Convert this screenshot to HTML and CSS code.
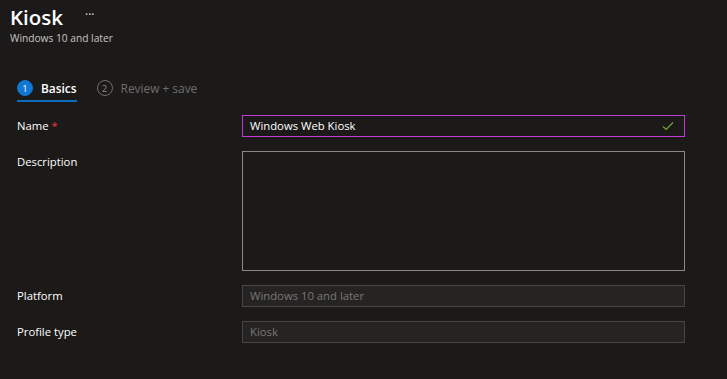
FILE: index.html
```html
<!DOCTYPE html>
<html lang="en">
<head>
<meta charset="utf-8">
<title>Kiosk</title>
<link rel="stylesheet" href="styles.css">
</head>
<body>
<header class="head">
  <div class="title-row">
    <h1 class="title">Kiosk</h1>
    <span class="more">···</span>
  </div>
  <div class="subtitle">Windows 10 and later</div>
</header>
<nav class="steps">
  <div class="step active">
    <span class="num">1</span>
    <span class="step-label">Basics</span>
  </div>
  <div class="step">
    <span class="num">2</span>
    <span class="step-label">Review + save</span>
  </div>
</nav>
<form class="form">
  <div class="row">
    <label class="label">Name <span class="req">*</span></label>
    <div class="field focus">
      <span class="value">Windows Web Kiosk</span>
      <svg class="check" width="12" height="10" viewBox="0 0 12 10"><path d="M1 5.5 L4.2 8.5 L11 1.5" fill="none" stroke="#73a832" stroke-width="1.2"/></svg>
    </div>
  </div>
  <div class="row">
    <label class="label">Description</label>
    <div class="field area"></div>
  </div>
  <div class="row">
    <label class="label">Platform</label>
    <div class="field disabled"><span class="value">Windows 10 and later</span></div>
  </div>
  <div class="row">
    <label class="label">Profile type</label>
    <div class="field disabled"><span class="value">Kiosk</span></div>
  </div>
</form>
</body>
</html>
```

FILE: styles.css
```css
html, body {
  margin: 0;
  padding: 0;
  background: #1b1a19;
  color: #ffffff;
  font-family: "Segoe UI", "Open Sans", "Noto Sans", sans-serif;
}
body {
  width: 727px;
  height: 379px;
  overflow: hidden;
}
.head {
  padding: 3px 0 0 10px;
}
.title-row {
  display: flex;
  align-items: center;
  height: 28px;
}
.title {
  margin: 0;
  font-size: 20.5px;
  font-weight: 600;
  line-height: 28px;
}
.more {
  margin-left: 22px;
  font-size: 12px;
  color: #e0e0e0;
  position: relative;
  top: -3px;
}
.subtitle {
  font-size: 10.2px;
  color: #c8c6c4;
  line-height: 14px;
}
.steps {
  display: flex;
  gap: 20px;
  margin: 31px 0 0 17px;
}
.step {
  display: flex;
  align-items: center;
  gap: 8px;
  height: 24px;
  color: #6e6d6c;
  font-size: 11.9px;
  border-bottom: 2px solid transparent;
}
.step.active {
  color: #ffffff;
  font-weight: 600;
  border-bottom-color: #0f6cbd;
}
.num {
  width: 14px;
  height: 14px;
  border-radius: 50%;
  border: 1px solid #6e6d6c;
  display: flex;
  align-items: center;
  justify-content: center;
  font-size: 9.5px;
  font-weight: 400;
  color: #8a8886;
}
.step.active .num {
  background: #0f78d4;
  border-color: #0f78d4;
  color: #ffffff;
}
.form {
  display: flex;
  flex-direction: column;
  gap: 14px;
  margin-top: 13px;
  padding-left: 17px;
}
.row {
  display: flex;
  align-items: flex-start;
}
.label {
  width: 225px;
  font-size: 11.3px;
  line-height: 22px;
  color: #ffffff;
}
.req {
  color: #e8383b;
}
.field {
  height: 20px;
  border: 1px solid #8a8886;
  display: flex;
  align-items: center;
  justify-content: space-between;
  padding: 0 10px 0 7px;
  box-sizing: content-box;
  width: 424px;
  font-size: 11.3px;
}
.field.focus {
  border-color: #c239d9;
}
.field.area {
  height: 118px;
}
.field.disabled {
  background: #252423;
  border-color: #484644;
  color: #797775;
}
.value {
  line-height: 20px;
}
.check {
  display: block;
}
```
